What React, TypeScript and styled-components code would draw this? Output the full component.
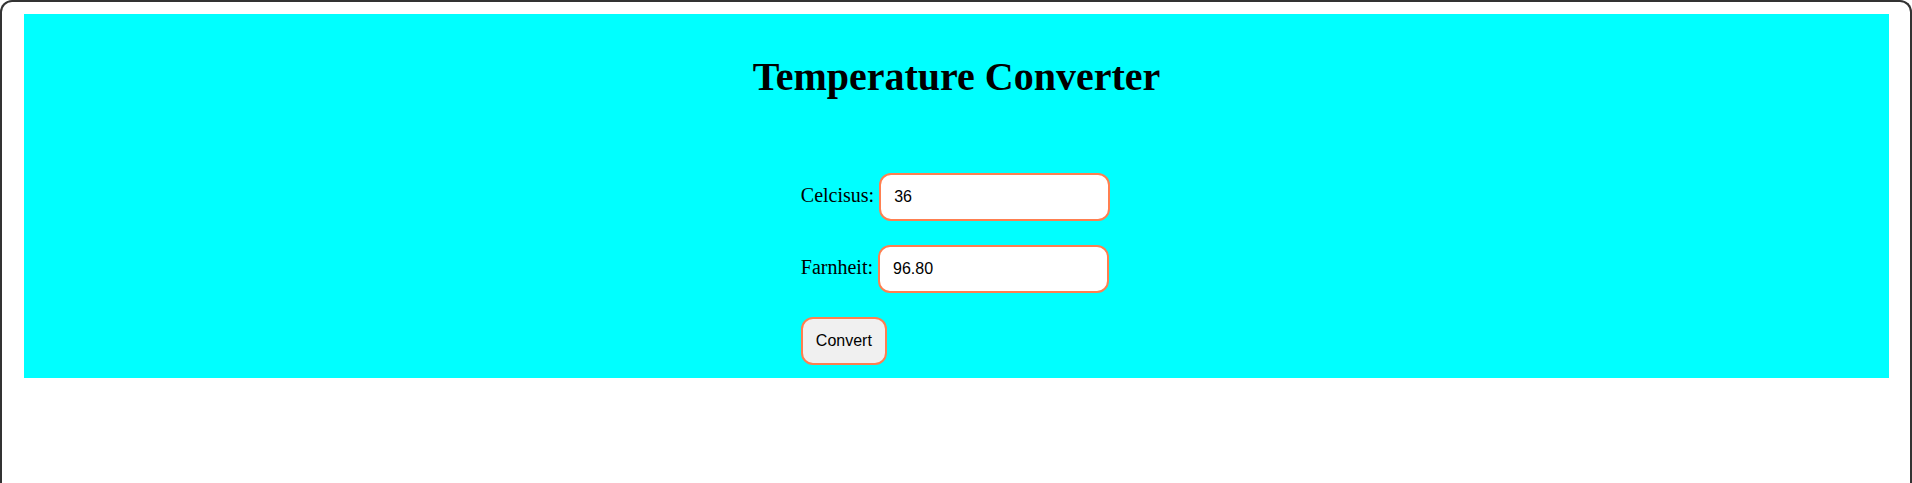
import React, { useState } from "react";
import styled, { createGlobalStyle } from "styled-components";

const GlobalStyle = createGlobalStyle`
  html, body {
    margin: 0;
    padding: 0;
    background: #ffffff;
  }
  body {
    font-family: "Liberation Serif", "Times New Roman", serif;
  }
  * { box-sizing: border-box; }
`;

const Frame = styled.div`
  min-height: 483px;
  border: 2px solid #333333;
  border-bottom: none;
  border-radius: 12px 12px 0 0;
  background: #ffffff;
  padding: 12px 21px 0 22px;
`;

const Panel = styled.section`
  background: #00ffff;
  padding: 40px 0 13px;
  display: flex;
  flex-direction: column;
  align-items: center;
`;

const Title = styled.h1`
  margin: 0;
  font-family: "Liberation Serif", "Times New Roman", serif;
  font-weight: 700;
  font-size: 40px;
  line-height: 46px;
  color: #000;
  text-align: center;
`;

const Form = styled.form`
  margin-top: 73px;
  margin-right: 2px;
  width: fit-content;
  display: flex;
  flex-direction: column;
  align-items: flex-start;
  gap: 24px;
`;

const Row = styled.div`
  display: flex;
  align-items: baseline;
  gap: 5px;
`;

const Label = styled.label`
  font-family: "Liberation Serif", "Times New Roman", serif;
  font-size: 20px;
  color: #000;
`;

const Field = styled.input`
  width: 231px;
  height: 48px;
  border: 2px solid #ff7f50;
  border-radius: 12px;
  background: #ffffff;
  padding: 0 13px;
  font-family: "Liberation Sans", Arial, sans-serif;
  font-size: 16px;
  color: #000;
  outline: none;
`;

const Button = styled.button`
  height: 48px;
  padding: 0 13px;
  border: 2px solid #ff7f50;
  border-radius: 12px;
  background: #f0f0f0;
  font-family: "Liberation Sans", Arial, sans-serif;
  font-size: 16px;
  color: #000;
  cursor: pointer;
`;

export default function App() {
  const [celsius, setCelsius] = useState("36");
  const [fahrenheit, setFahrenheit] = useState("96.80");

  const convert = (e: React.FormEvent) => {
    e.preventDefault();
    const c = parseFloat(celsius);
    if (!isNaN(c)) setFahrenheit(((c * 9) / 5 + 32).toFixed(2));
  };

  return (
    <>
      <GlobalStyle />
      <Frame>
        <Panel>
          <Title>Temperature Converter</Title>
          <Form onSubmit={convert}>
            <Row>
              <Label htmlFor="c">Celcisus:</Label>
              <Field id="c" value={celsius} onChange={(e) => setCelsius(e.target.value)} />
            </Row>
            <Row>
              <Label htmlFor="f">Farnheit:</Label>
              <Field id="f" value={fahrenheit} onChange={(e) => setFahrenheit(e.target.value)} />
            </Row>
            <Button type="submit">Convert</Button>
          </Form>
        </Panel>
      </Frame>
    </>
  );
}
